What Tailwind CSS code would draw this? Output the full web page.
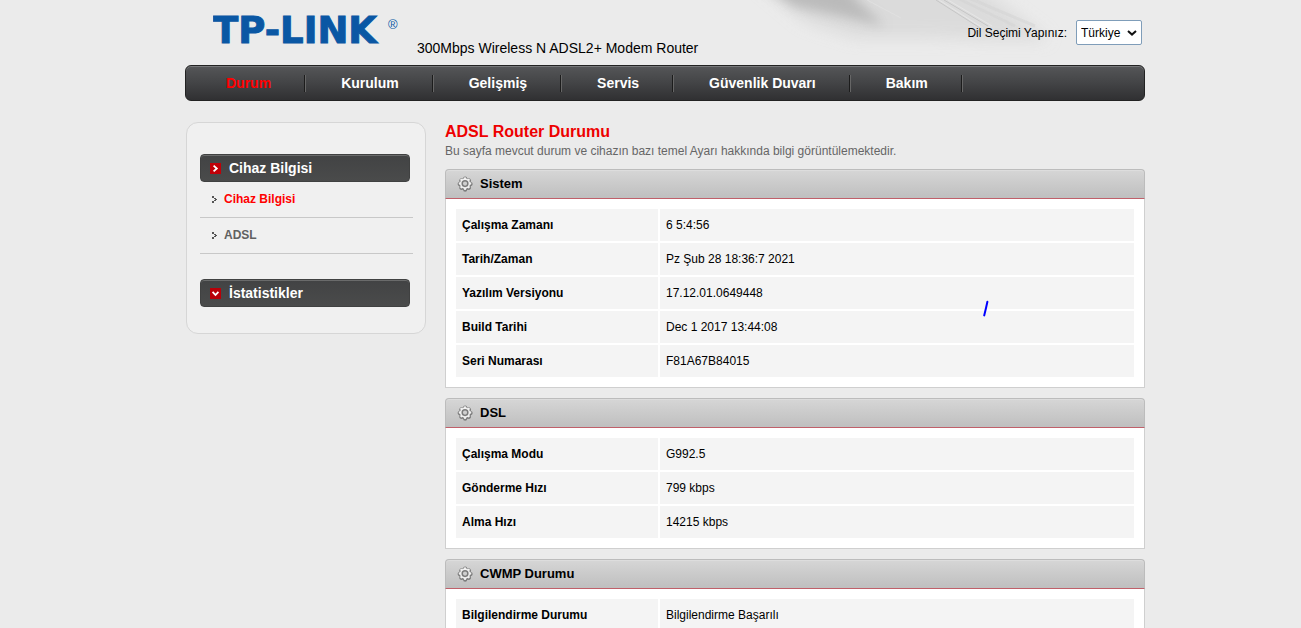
<!DOCTYPE html>
<html lang="tr">
<head>
<meta charset="utf-8">
<meta name="viewport" content="width=device-width, initial-scale=1">
<title>TP-LINK – ADSL Router Durumu</title>
<script src="https://cdn.jsdelivr.net/npm/@tailwindcss/browser@4"></script>
</head>
<body class="bg-[#ebebeb] font-['Liberation_Sans',Arial,sans-serif] text-xs text-black">
<svg class="hidden" aria-hidden="true">
  <defs>
    <symbol id="gear" viewBox="0 0 18 18">
      <g fill="#7c7c7c" stroke="#7c7c7c">
        <circle cx="8.6" cy="8.6" r="6.6" stroke="none"/>
        <path stroke-width="4.4" stroke-linecap="round" d="M8.6 2.8v11.8M2.8 8.6h11.6M4.6 4.6l8 8M12.6 4.6l-8 8"/>
      </g>
      <g fill="#f0f0f0" stroke="#f0f0f0">
        <circle cx="8.5" cy="8" r="5.4" stroke="none"/>
        <path stroke-width="2.6" stroke-linecap="round" d="M8.5 2.6v10.8M3.1 8h10.8M4.7 4.2l7.6 7.6M12.3 4.2l-7.6 7.6"/>
      </g>
      <circle cx="8.5" cy="8" r="3" fill="#cfcfcf" stroke="#7c7c7c" stroke-width="1.6"/>
    </symbol>
    <symbol id="bullet" viewBox="0 0 5 7">
      <path fill="#555" d="M0 0h2v2h2v1h1v1H4v1H2v2H0V5h2V4h1V3H2V2H0z"/>
    </symbol>
  </defs>
</svg>
<div class="h-screen overflow-hidden pl-[29px]">
  <div class="mx-auto max-w-[960px]">
    <header class="relative flex h-[65px] items-start">
      <svg class="absolute top-0 right-[60px] h-[64px] w-[360px]" viewBox="0 0 360 64" aria-hidden="true">
        <defs>
          <filter id="mist" x="-20%" y="-60%" width="140%" height="220%"><feGaussianBlur stdDeviation="8"/></filter>
          <filter id="core" x="-20%" y="-60%" width="140%" height="220%"><feGaussianBlur stdDeviation="6"/></filter>
          <filter id="soft"><feGaussianBlur stdDeviation=".5"/></filter>
        </defs>
        <path filter="url(#mist)" fill="#d9d9d9" opacity=".85" d="M25-24H240L325 40 270 40 200 38 130 38 80 22z"/>
        <path filter="url(#core)" fill="#b0b0b0" opacity=".75" d="M36-16h84l14 18 26 24-46-10-46-10z"/>
        <g filter="url(#soft)" fill="none">
          <path stroke="#c6c6c6" stroke-width="1" d="M211 0 255 28M219 0 263 26"/>
          <path stroke="#e6e6e6" stroke-width="1" d="M214 0 258 28M223 0 267 26"/>
          <path stroke="#cfcfcf" stroke-width="3" opacity=".4" d="M232-2 290 26M244-2 310 26"/>
          <path stroke="#e2e2e2" stroke-width="1" opacity=".7" d="M142 0 176 18"/>
        </g>
      </svg>
      <svg class="relative ml-7 mt-2 h-11 w-[188px] shrink-0" viewBox="0 0 188 44" role="img" aria-label="TP-LINK">
        <text x="0" y="35" fill="#0a57a4" stroke="#0a57a4" stroke-width="1" font-family="DejaVu Sans" font-weight="700" font-size="37">TP-LINK</text>
        <text x="175" y="21" fill="#0a57a4" font-family="Liberation Sans" font-size="13">®</text>
      </svg>
      <p class="relative ml-4 mt-10 text-sm leading-4 whitespace-nowrap">300Mbps Wireless N ADSL2+ Modem Router</p>
      <form class="relative mt-5 mr-[3px] ml-auto flex items-center gap-[9px]">
        <label for="lang">Dil Seçimi Yapınız:</label>
        <span class="relative block">
          <select id="lang" class="h-[25px] w-[66px] appearance-none rounded-xs border border-[#7f9db9] bg-white pl-1 text-xs">
            <option>Türkiye</option>
          </select>
          <svg class="pointer-events-none absolute top-[10px] right-[5px] h-[6px] w-[10px]" viewBox="0 0 10 6" fill="none" stroke="#111" stroke-width="2" aria-hidden="true"><path d="M1 1l4 3.6L9 1"/></svg>
        </span>
      </form>
    </header>

    <nav class="flex h-9 items-center rounded-md border border-[#222] bg-linear-to-b from-[#555658] from-0% via-[#434446] via-50% to-[#303032] to-100% pl-[5px] text-sm font-bold text-white inset-shadow-[0_1px_0_#77787a]">
      <a href="#" class="pr-[33px] pl-[35px] text-[#ff0000]">Durum</a>
      <span class="h-[17px] w-0.5 border-l border-[#1c1c1c] bg-[#666]"></span>
      <a href="#" class="pr-[33px] pl-[35px]">Kurulum</a>
      <span class="h-[17px] w-0.5 border-l border-[#1c1c1c] bg-[#666]"></span>
      <a href="#" class="pr-[33px] pl-[35px]">Gelişmiş</a>
      <span class="h-[17px] w-0.5 border-l border-[#1c1c1c] bg-[#666]"></span>
      <a href="#" class="pr-[33px] pl-[35px]">Servis</a>
      <span class="h-[17px] w-0.5 border-l border-[#1c1c1c] bg-[#666]"></span>
      <a href="#" class="pr-[33px] pl-[35px]">Güvenlik Duvarı</a>
      <span class="h-[17px] w-0.5 border-l border-[#1c1c1c] bg-[#666]"></span>
      <a href="#" class="pr-[33px] pl-[35px]">Bakım</a>
      <span class="h-[17px] w-0.5 border-l border-[#1c1c1c] bg-[#666]"></span>
    </nav>

    <div class="flex items-start gap-[19px] pt-[21px]">
      <aside class="ml-px w-60 shrink-0 rounded-xl border border-[#d6d6d6] bg-[#f0f0f0] pr-3 pl-[13px] pt-[31px] pb-[26px] font-bold">
        <button type="button" class="flex h-7 w-[210px] items-center gap-2 rounded-sm border border-[#404141] bg-linear-to-b from-[#424344] to-[#4a4b4b] pl-[9px] text-sm text-white inset-shadow-[0_1px_0_#6a6b6b]">
          <svg class="h-[11px] w-[11px]" viewBox="0 0 11 11" aria-hidden="true"><path fill="#c00008" d="M0 0h11v11H0z"/><path fill="none" stroke="#fff" stroke-width="1.8" d="M3.6 2.6l3.2 2.9-3.2 2.9"/></svg>
          <span>Cihaz Bilgisi</span>
        </button>
        <ul>
          <li class="flex h-9 items-center gap-[7px] border-b border-[#c8c8c8] pb-0.5 pl-3">
            <svg class="mt-0.5 h-[7px] w-[5px]" aria-hidden="true"><use href="#bullet"/></svg>
            <a href="#" class="text-[#ff0000]">Cihaz Bilgisi</a>
          </li>
          <li class="flex h-9 items-center gap-[7px] border-b border-[#c8c8c8] pb-0.5 pl-3">
            <svg class="mt-0.5 h-[7px] w-[5px]" aria-hidden="true"><use href="#bullet"/></svg>
            <a href="#" class="text-[#606060]">ADSL</a>
          </li>
        </ul>
        <button type="button" class="mt-[25px] flex h-7 w-[210px] items-center gap-2 rounded-sm border border-[#404141] bg-linear-to-b from-[#424344] to-[#4a4b4b] pl-[9px] text-sm text-white inset-shadow-[0_1px_0_#6a6b6b]">
          <svg class="h-[11px] w-[11px]" viewBox="0 0 11 11" aria-hidden="true"><path fill="#b80008" d="M0 0h11v11H0z"/><path fill="none" stroke="#fff" stroke-width="1.8" d="M2.6 3.8l2.9 3.2 2.9-3.2"/></svg>
          <span>İstatistikler</span>
        </button>
      </aside>

      <main class="min-w-0 flex-1">
        <h1 class="text-base leading-5 font-bold text-[#ee0000]">ADSL Router Durumu</h1>
        <p class="mt-px mb-[10px] leading-4 text-[#666]">Bu sayfa mevcut durum ve cihazın bazı temel Ayarı hakkında bilgi görüntülemektedir.</p>

        <section class="relative mb-[10px]">
          <h2 class="flex h-[30px] items-center gap-[6px] rounded-t-sm border border-[#bcbcbc] border-b-[#c0606a] bg-linear-to-b from-[#d6d6d6] to-[#bfbfbf] pl-[11px] text-[13px] font-bold inset-shadow-[0_1px_0_#dddddd]"><svg class="size-[17px]" aria-hidden="true"><use href="#gear"/></svg>Sistem</h2>
          <div class="border border-t-0 border-[#cfcfcf] bg-white p-2">
            <table class="w-full table-fixed border-separate border-spacing-0.5 text-left">
              <colgroup><col class="w-[202px]"><col></colgroup>
              <tbody>
                <tr class="h-8"><th scope="row" class="bg-[#f4f4f4] px-1.5 py-0">Çalışma Zamanı</th><td class="bg-[#f4f4f4] px-1.5 py-0">6 5:4:56</td></tr>
                <tr class="h-8"><th scope="row" class="bg-[#f4f4f4] px-1.5 py-0">Tarih/Zaman</th><td class="bg-[#f4f4f4] px-1.5 py-0">Pz Şub 28 18:36:7 2021</td></tr>
                <tr class="h-8"><th scope="row" class="bg-[#f4f4f4] px-1.5 py-0">Yazılım Versiyonu</th><td class="bg-[#f4f4f4] px-1.5 py-0">17.12.01.0649448</td></tr>
                <tr class="h-8"><th scope="row" class="bg-[#f4f4f4] px-1.5 py-0">Build Tarihi</th><td class="bg-[#f4f4f4] px-1.5 py-0">Dec 1 2017 13:44:08</td></tr>
                <tr class="h-8"><th scope="row" class="bg-[#f4f4f4] px-1.5 py-0">Seri Numarası</th><td class="bg-[#f4f4f4] px-1.5 py-0">F81A67B84015</td></tr>
              </tbody>
            </table>
          </div>
          <svg class="absolute top-[131px] right-[156px] h-[18px] w-[7px]" viewBox="0 0 7 18" aria-hidden="true"><path fill="none" stroke="#0000ff" stroke-width="2" stroke-linecap="round" d="M5.4 1.8 4 8 2.2 15.4"/></svg>
        </section>

        <section class="mb-[10px]">
          <h2 class="flex h-[30px] items-center gap-[6px] rounded-t-sm border border-[#bcbcbc] border-b-[#c0606a] bg-linear-to-b from-[#d6d6d6] to-[#bfbfbf] pl-[11px] text-[13px] font-bold inset-shadow-[0_1px_0_#dddddd]"><svg class="size-[17px]" aria-hidden="true"><use href="#gear"/></svg>DSL</h2>
          <div class="border border-t-0 border-[#cfcfcf] bg-white p-2">
            <table class="w-full table-fixed border-separate border-spacing-0.5 text-left">
              <colgroup><col class="w-[202px]"><col></colgroup>
              <tbody>
                <tr class="h-8"><th scope="row" class="bg-[#f4f4f4] px-1.5 py-0">Çalışma Modu</th><td class="bg-[#f4f4f4] px-1.5 py-0">G992.5</td></tr>
                <tr class="h-8"><th scope="row" class="bg-[#f4f4f4] px-1.5 py-0">Gönderme Hızı</th><td class="bg-[#f4f4f4] px-1.5 py-0">799 kbps</td></tr>
                <tr class="h-8"><th scope="row" class="bg-[#f4f4f4] px-1.5 py-0">Alma Hızı</th><td class="bg-[#f4f4f4] px-1.5 py-0">14215 kbps</td></tr>
              </tbody>
            </table>
          </div>
        </section>

        <section>
          <h2 class="flex h-[30px] items-center gap-[6px] rounded-t-sm border border-[#bcbcbc] border-b-[#c0606a] bg-linear-to-b from-[#d6d6d6] to-[#bfbfbf] pl-[11px] text-[13px] font-bold inset-shadow-[0_1px_0_#dddddd]"><svg class="size-[17px]" aria-hidden="true"><use href="#gear"/></svg>CWMP Durumu</h2>
          <div class="border border-t-0 border-[#cfcfcf] bg-white p-2">
            <table class="w-full table-fixed border-separate border-spacing-0.5 text-left">
              <colgroup><col class="w-[202px]"><col></colgroup>
              <tbody>
                <tr class="h-8"><th scope="row" class="bg-[#f4f4f4] px-1.5 py-0">Bilgilendirme Durumu</th><td class="bg-[#f4f4f4] px-1.5 py-0">Bilgilendirme Başarılı</td></tr>
              </tbody>
            </table>
          </div>
        </section>
      </main>
    </div>
  </div>
</div>
</body>
</html>
